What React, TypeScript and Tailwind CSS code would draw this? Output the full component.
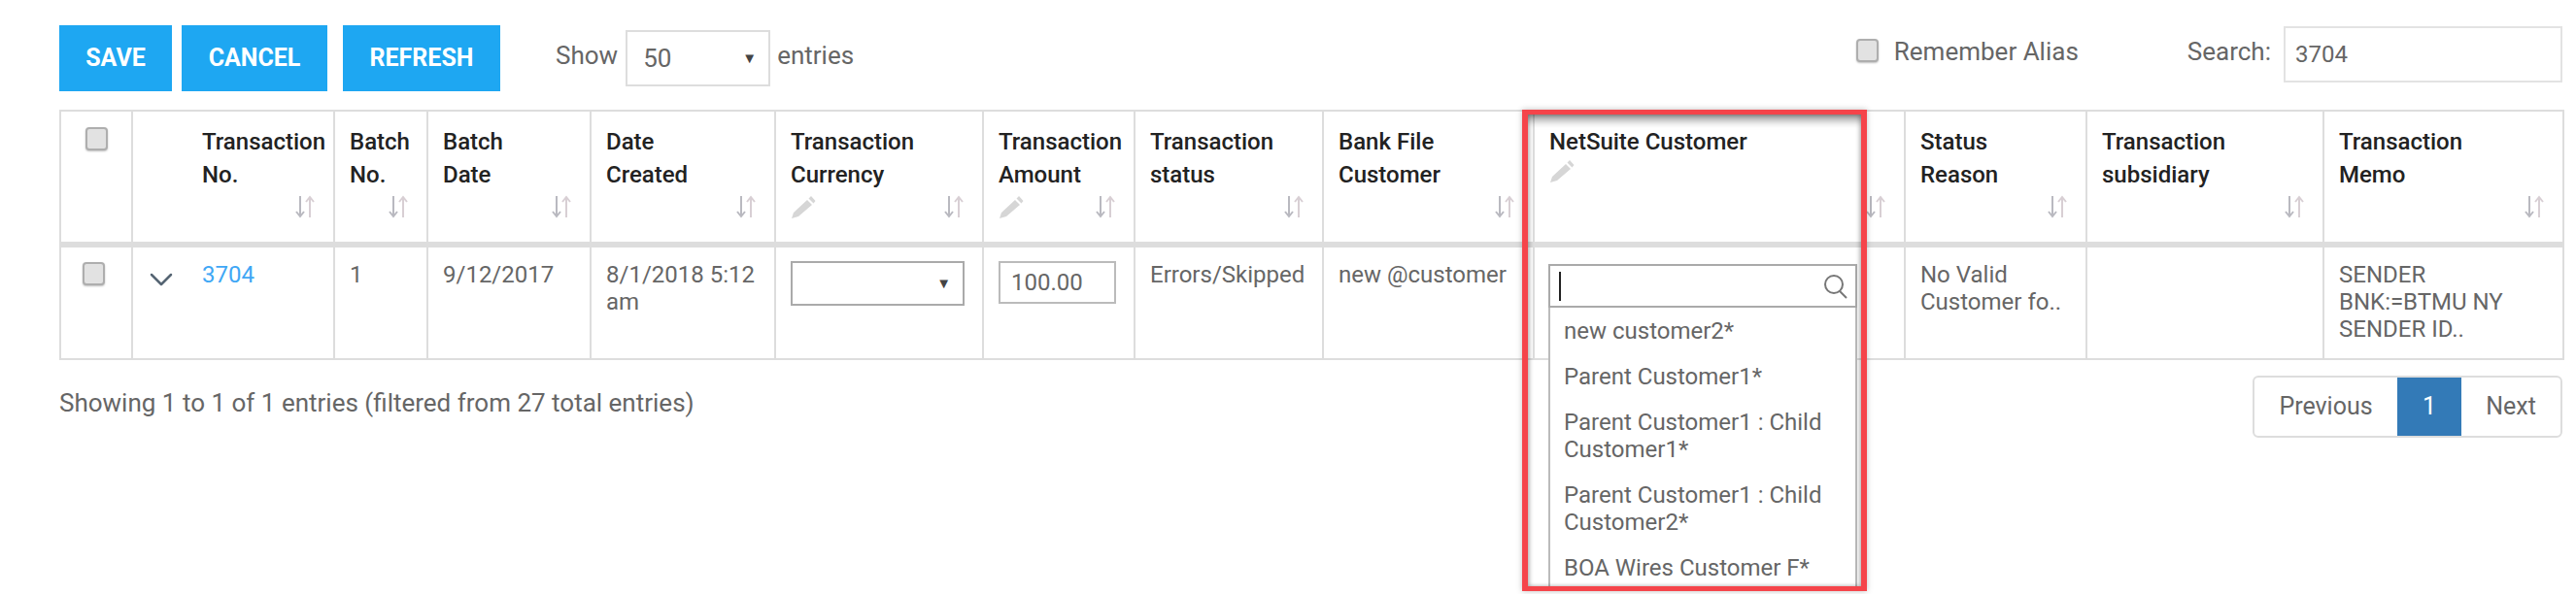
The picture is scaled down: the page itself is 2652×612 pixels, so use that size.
import { ChevronDown } from 'lucide-react';

const SortIcon = () => (
  <svg width="22" height="26" viewBox="0 0 22 26" fill="none" className="shrink-0">
    <path d="M6 2v21M2 18l4 5 4-5" stroke="#b9b9c0" strokeWidth="2" />
    <path d="M16 24V3M12 8l4-5 4 5" stroke="#d8cfd4" strokeWidth="2" />
  </svg>
);

const PencilIcon = () => (
  <svg width="26" height="26" viewBox="0 0 26 26" className="shrink-0">
    <path d="M1 25l2-6L17 6l5 5L8 23zM18.500 4.500L21 2l4.500 5-2 2.500z" fill="#d6d6d6" />
  </svg>
);

const Checkbox = ({ className }: { className?: string }) => (
  <span className={`block h-[24px] w-[23px] shrink-0 rounded-[4px] border-2 border-[#aeaeae] bg-[#e2e2e2] shadow-[0_1px_2px_rgba(0,0,0,0.25)] ${className ?? ''}`} />
);

type Col = { title: string[]; pencil?: boolean; width: string };

const columns: Col[] = [
  { title: ['Batch', 'No.'], width: 'w-[96px]' },
  { title: ['Batch', 'Date'], width: 'w-[168px]' },
  { title: ['Date', 'Created'], width: 'w-[190px]' },
  { title: ['Transaction', 'Currency'], pencil: true, width: 'w-[214px]' },
  { title: ['Transaction', 'Amount'], pencil: true, width: 'w-[156px]' },
  { title: ['Transaction', 'status'], width: 'w-[194px]' },
  { title: ['Bank File', 'Customer'], width: 'w-[217px]' },
];

const options = ['new customer2*', 'Parent Customer1*', 'Parent Customer1 : Child Customer1*', 'Parent Customer1 : Child Customer2*', 'BOA Wires Customer F*'];

const thClass = 'border-2 border-[#ddd] border-b-[6px] p-0 align-top text-left font-medium text-[#222]';
const tdClass = 'border-2 border-[#ddd] p-0 align-top';
const btnClass = 'h-[68px] shrink-0 bg-[#1ea7f2] text-[25px] font-bold text-white';

const HeaderBody = ({ title, pencil, left = 'pl-[15px]' }: { title: string[]; pencil?: boolean; left?: string }) => (
  <div className={`flex h-[134px] flex-col pt-[14px] pb-[23px] pr-[18px] ${left}`}>
    {title.map((line) => (
      <div key={line} className="whitespace-nowrap">{line}</div>
    ))}
    <div className={`mt-auto flex items-center ${pencil ? 'justify-between' : 'justify-end'}`}>
      {pencil && <PencilIcon />}
      <SortIcon />
    </div>
  </div>
);

export default function App() {
  return (
    <div className="h-[612px] w-[2652px] overflow-hidden bg-white pl-[61px] pr-[14px] pt-[26px] font-['Roboto',sans-serif] text-[24px] leading-[34px] text-[#666]">
      {/* toolbar */}
      <div className="flex h-[68px] items-start text-[26px]">
        <button className={`${btnClass} w-[116px]`}>SAVE</button>
        <button className={`${btnClass} ml-[10px] w-[150px]`}>CANCEL</button>
        <button className={`${btnClass} ml-[16px] w-[162px]`}>REFRESH</button>
        <span className="ml-[57px] mt-[14px] shrink-0">Show</span>
        <div className="ml-[8px] mt-[5px] flex h-[58px] w-[149px] shrink-0 items-center justify-between border-2 border-[#ddd] pl-[16px] pr-[12px]">
          <span>50</span>
          <span className="text-[15px] text-[#444]">▼</span>
        </div>
        <span className="ml-[7px] mt-[14px] shrink-0">entries</span>
        <div className="ml-auto flex items-start">
          <Checkbox className="mt-[14px]" />
          <span className="ml-[16px] mt-[10px] shrink-0">Remember Alias</span>
          <span className="ml-[112px] mt-[10px] shrink-0">Search:</span>
          <div className="ml-[13px] mt-px flex h-[58px] w-[287px] shrink-0 items-center border-2 border-[#e3e3e3] pl-[10px] text-[24px]">3704</div>
        </div>
      </div>

      {/* table */}
      <div className="relative mt-[19px]">
        <table className="w-[2577px] table-fixed border-collapse">
          <thead>
            <tr>
              <th className={`${thClass} w-[74px]`}>
                <Checkbox className="ml-[25px] mt-[16px]" />
              </th>
              <th className={`${thClass} w-[208px]`}>
                <HeaderBody title={['Transaction', 'No.']} left="pl-[71px]" />
              </th>
              {columns.map((col) => (
                <th key={col.title.join(' ')} className={`${thClass} ${col.width}`}>
                  <HeaderBody title={col.title} pencil={col.pencil} />
                </th>
              ))}
              <th className={`${thClass} w-[382px]`}>
                <div className="relative h-[134px] pl-[15px] pt-[14px]">
                  <div>NetSuite Customer</div>
                  <PencilIcon />
                  <div className="absolute bottom-[23px] right-[18px]">
                    <SortIcon />
                  </div>
                </div>
              </th>
              <th className={`${thClass} w-[187px]`}>
                <HeaderBody title={['Status', 'Reason']} />
              </th>
              <th className={`${thClass} w-[244px]`}>
                <HeaderBody title={['Transaction', 'subsidiary']} />
              </th>
              <th className={`${thClass} w-[247px]`}>
                <HeaderBody title={['Transaction', 'Memo']} />
              </th>
            </tr>
          </thead>
          <tbody className="text-[24px] leading-[28px]">
            <tr className="h-[118px]">
              <td className={tdClass}>
                <Checkbox className="ml-[22px] mt-[15px]" />
              </td>
              <td className={tdClass}>
                <div className="flex pt-[14px]">
                  <ChevronDown size={40} strokeWidth={1.5} className="-mt-[1px] ml-[9px] h-[40px] text-[#566573]" />
                  <a className="ml-[22px] text-[#3fa7f5]">3704</a>
                </div>
              </td>
              <td className={`${tdClass} pl-[15px] pt-[14px]`}>1</td>
              <td className={`${tdClass} pl-[15px] pt-[14px]`}>9/12/2017</td>
              <td className={`${tdClass} pl-[15px] pr-[10px] pt-[14px]`}>8/1/2018 5:12 am</td>
              <td className={`${tdClass} pl-[15px] pt-[14px]`}>
                <div className="flex h-[46px] w-[179px] items-center justify-end border-2 border-[#aaa] pr-[12px]">
                  <span className="text-[15px] text-[#444]">▼</span>
                </div>
              </td>
              <td className={`${tdClass} pl-[15px] pt-[14px]`}>
                <div className="flex h-[44px] w-[121px] items-center border-2 border-[#bbb] pl-[11px]">100.00</div>
              </td>
              <td className={`${tdClass} pl-[15px] pt-[14px] whitespace-nowrap`}>Errors/Skipped</td>
              <td className={`${tdClass} pl-[15px] pt-[14px] whitespace-nowrap`}>new @customer</td>
              <td className={`${tdClass} relative`}>
                {/* select2 style dropdown */}
                <div className="absolute left-[14px] top-[17px] z-10 w-[318px] bg-white">
                  <div className="flex h-[45px] items-center justify-between border-2 border-[#aaa] pl-[9px] pr-[6px]">
                    <span className="h-[30px] w-[2px] bg-[#222]" />
                    <svg width="28" height="28" viewBox="0 0 28 28" fill="none" stroke="#777" strokeWidth="2">
                      <circle cx="12" cy="12" r="9" />
                      <path d="M18 19l7 7" />
                    </svg>
                  </div>
                  <ul className="h-[292px] overflow-hidden border-x-2 border-[#bbb] pl-[14px] pr-[12px] pt-[10px]">
                    {options.map((opt) => (
                      <li key={opt} className="pb-[19px]">{opt}</li>
                    ))}
                  </ul>
                </div>
              </td>
              <td className={`${tdClass} pl-[15px] pr-[10px] pt-[14px]`}>No Valid Customer fo..</td>
              <td className={tdClass} />
              <td className={`${tdClass} pl-[15px] pr-[50px] pt-[14px]`}>SENDER BNK:=BTMU NY SENDER ID..</td>
            </tr>
          </tbody>
        </table>

        {/* red highlight drawn over the column */}
        <div className="pointer-events-none absolute left-[1506px] top-0 z-20 h-[496px] w-[355px] border-x-[6px] border-y-[5px] border-[#f5444a] shadow-[0_0_6px_rgba(0,0,0,0.25),inset_0_10px_8px_-4px_rgba(0,0,0,0.4),inset_2px_0_4px_rgba(0,0,0,0.2),inset_-2px_0_4px_rgba(0,0,0,0.2)]" />

        {/* footer */}
        <div className="mt-[16px] flex items-start justify-between">
          <span className="mt-[11px] text-[26px]">Showing 1 to 1 of 1 entries (filtered from 27 total entries)</span>
          <div className="flex h-[64px] items-stretch overflow-hidden rounded-[6px] border-2 border-[#ddd] text-[25px]">
            <span className="flex w-[147px] items-center justify-center">Previous</span>
            <span className="flex w-[66px] items-center justify-center bg-[#337ab7] text-white">1</span>
            <span className="flex w-[102px] items-center justify-center">Next</span>
          </div>
        </div>
      </div>
    </div>
  );
}
